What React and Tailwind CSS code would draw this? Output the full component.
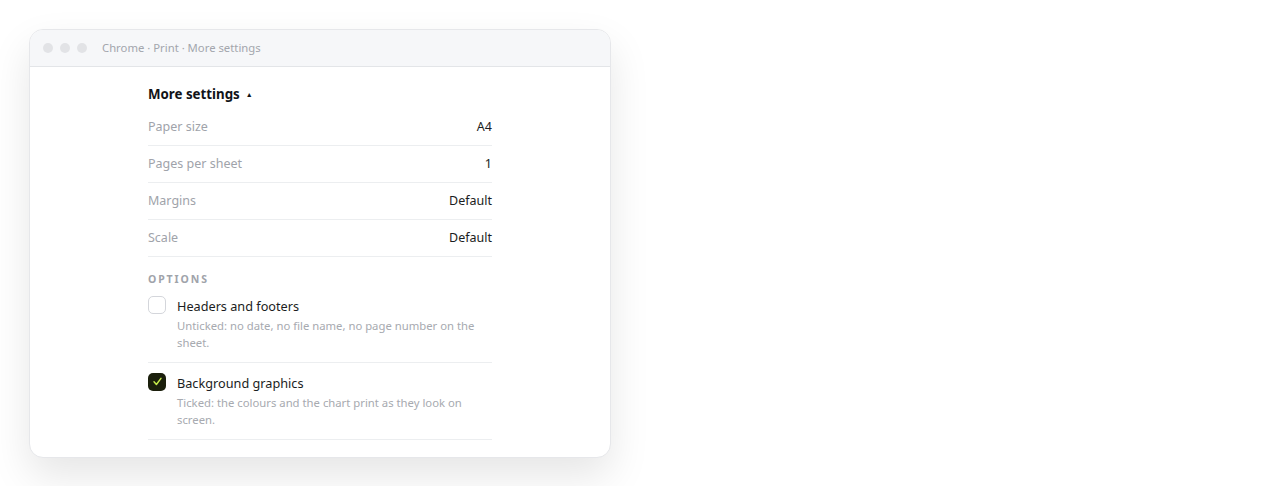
const rows = [
  { label: "Paper size", value: "A4" },
  { label: "Pages per sheet", value: "1" },
  { label: "Margins", value: "Default" },
  { label: "Scale", value: "Default" },
];

const options = [
  {
    title: "Headers and footers",
    note: "Unticked: no date, no file name, no page number on the sheet.",
    checked: false,
  },
  {
    title: "Background graphics",
    note: "Ticked: the colours and the chart print as they look on screen.",
    checked: true,
  },
];

function Checkbox({ checked }) {
  if (checked) {
    return (
      <span className="flex h-[18px] w-[18px] shrink-0 items-center justify-center rounded-[5px] bg-[#1b1f0c]">
        <svg width="11" height="11" viewBox="0 0 12 12" fill="none">
          <path d="M2.2 6.4 4.8 9.2 9.8 2.6" stroke="#c6ec4a" strokeWidth="1.6" strokeLinecap="round" strokeLinejoin="round" />
        </svg>
      </span>
    );
  }
  return <span className="h-[18px] w-[18px] shrink-0 rounded-[5px] border border-[#d4d6db] bg-white" />;
}

export default function App() {
  return (
    <div className="h-[486px] w-[1280px] bg-white pl-[29px] pt-[29px] font-['Noto_Sans',sans-serif]">
      <div className="w-[582px] overflow-hidden rounded-[14px] border border-[#e6e7ea] bg-white shadow-[0_18px_40px_rgba(0,0,0,0.10)]">
        <div className="flex h-[37px] items-center gap-[7px] border-b border-[#e3e5e8] bg-[#f6f7f9] px-[13px]">
          <span className="h-[10px] w-[10px] rounded-full bg-[#e2e3e6]" />
          <span className="h-[10px] w-[10px] rounded-full bg-[#e2e3e6]" />
          <span className="h-[10px] w-[10px] rounded-full bg-[#e2e3e6]" />
          <span className="ml-[8px] mt-[1px] text-[11.3px] text-[#a3a6ad]">Chrome · Print · More settings</span>
        </div>

        <div className="mx-auto w-[344px] pb-[17px] pt-[18px]">
          <div className="flex items-center gap-[6px] pb-[4px] text-[13.3px] font-bold text-[#111318]">
            More settings
            <span className="text-[7px] leading-none">▲</span>
          </div>

          {rows.map((r) => (
            <div key={r.label} className="flex h-[37px] items-center justify-between border-b border-[#eceef0] text-[12.5px]">
              <span className="text-[#a0a3aa]">{r.label}</span>
              <span className="text-[#1b1d22]">{r.value}</span>
            </div>
          ))}

          <div className="pb-[8px] pt-[15px] text-[10.5px] font-bold tracking-[0.18em] text-[#a0a3aa]">OPTIONS</div>

          {options.map((o, i) => (
            <div key={o.title} className={`flex gap-[11px] border-b border-[#eceef0] pb-[11px] ${i > 0 ? "pt-[10px]" : ""}`}>
              <Checkbox checked={o.checked} />
              <div>
                <div className="text-[12.7px] leading-[21px] text-[#1b1d22]">{o.title}</div>
                <div className="text-[11.3px] leading-[17px] text-[#a7aab0]">{o.note}</div>
              </div>
            </div>
          ))}
        </div>
      </div>
    </div>
  );
}
